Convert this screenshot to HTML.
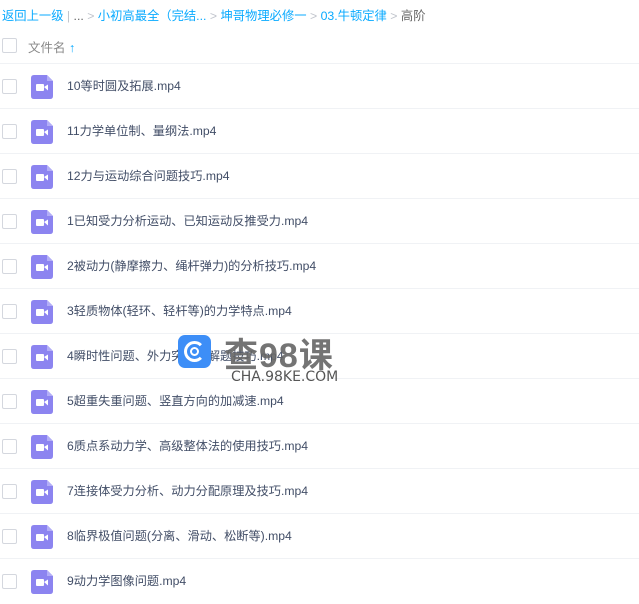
<!DOCTYPE html><html><head><meta charset="utf-8"><style>
body{margin:0;width:639px;height:593px;overflow:hidden;background:#fff;font-family:"Liberation Sans","Noto Sans CJK SC",sans-serif;font-size:12px;color:#333;position:relative}
.bc{position:absolute;left:2px;top:6px;color:#09AAFF;white-space:nowrap;font-size:12.3px}
.bc .g{color:#c0c4cc}.bc .d{color:#666}
.cb{position:absolute;left:2px;width:13px;height:13px;border:1px solid #d4d7de;border-radius:2px;background:#fff}
.hd{position:absolute;left:28px;top:37px;color:#888;font-size:12.5px}
.row{position:absolute;left:0;width:639px;height:45px;border-top:1px solid #f0f2f5}
.ic{position:absolute;left:31px;top:11px}
.nm{position:absolute;left:67px;top:12px;color:#424e67;font-size:12.2px}
</style></head><body>
<div class="bc">返回上一级 <span class="g">|</span> <span class="d">...</span> <span class="g">&gt;</span> 小初高最全（完结... <span class="g">&gt;</span> 坤哥物理必修一 <span class="g">&gt;</span> 03.牛顿定律 <span class="g">&gt;</span> <span class="d">高阶</span></div>
<div class="cb" style="top:38px"></div>
<div class="hd">文件名 <span style="color:#09AAFF;font-weight:bold">↑</span></div>
<div id="rows"></div>
<script>
var n=["10等时圆及拓展.mp4","11力学单位制、量纲法.mp4","12力与运动综合问题技巧.mp4","1已知受力分析运动、已知运动反推受力.mp4","2被动力(静摩擦力、绳杆弹力)的分析技巧.mp4","3轻质物体(轻环、轻杆等)的力学特点.mp4","4瞬时性问题、外力突变类解题技巧.mp4","5超重失重问题、竖直方向的加减速.mp4","6质点系动力学、高级整体法的使用技巧.mp4","7连接体受力分析、动力分配原理及技巧.mp4","8临界极值问题(分离、滑动、松断等).mp4","9动力学图像问题.mp4"];
var h="";n.forEach(function(t,i){h+='<div class="row" style="top:'+(63+i*45)+'px"><div class="cb" style="top:15px"></div><svg class="ic" width="22" height="24" viewBox="0 0 22 24"><path d="M3 0H16L22 6V21Q22 24 19 24H3Q0 24 0 21V3Q0 0 3 0Z" fill="#8c84f0"/><path d="M16 0V6H22Z" fill="#b3aef7"/><rect x="5" y="9" width="8" height="7" rx="1" fill="#fff"/><path d="M13 12L17 9.5V15.5Z" fill="#fff"/></svg><div class="nm">'+t+'</div></div>'});
document.getElementById("rows").innerHTML=h;
</script>
<div style="position:absolute;left:178px;top:335px;width:33px;height:33px;border-radius:7px;background:#3d8ef7"><div style="position:absolute;left:6px;top:6px;width:15px;height:15px;border:3px solid #fff;border-radius:50%;border-right-color:transparent"></div><div style="position:absolute;left:12px;top:12px;width:5px;height:5px;border:2px solid #fff;border-radius:50%"></div></div>
<div style="position:absolute;left:224px;top:328px;font-size:34px;color:#666;font-weight:bold;letter-spacing:1px;opacity:.9">查98课</div>
<div style="position:absolute;left:231px;top:369px;font-size:14px;color:#555;font-family:'DejaVu Sans',sans-serif">CHA.98KE.COM</div>
</body></html>
